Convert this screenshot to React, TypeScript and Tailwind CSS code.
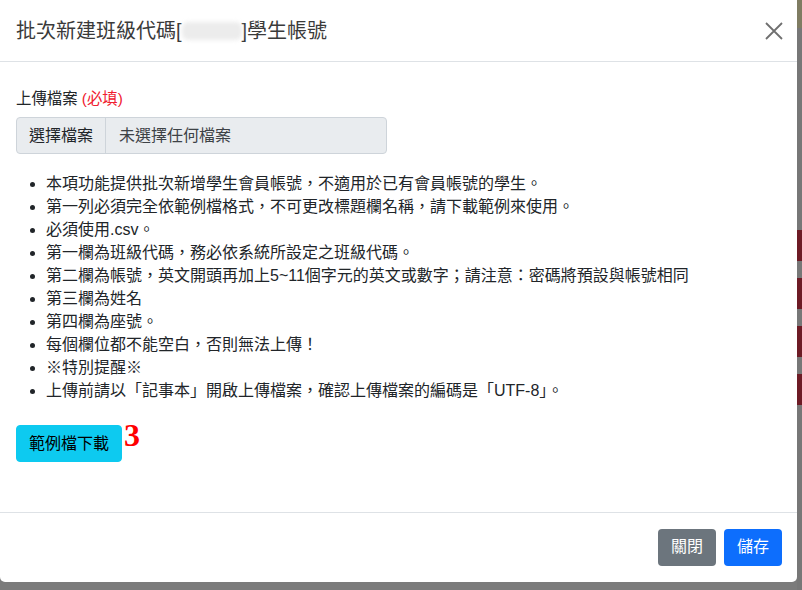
import React from "react";

const items = [
  "本項功能提供批次新增學生會員帳號，不適用於已有會員帳號的學生。",
  "第一列必須完全依範例檔格式，不可更改標題欄名稱，請下載範例來使用。",
  "必須使用.csv。",
  "第一欄為班級代碼，務必依系統所設定之班級代碼。",
  "第二欄為帳號，英文開頭再加上5~11個字元的英文或數字；請注意：密碼將預設與帳號相同",
  "第三欄為姓名",
  "第四欄為座號。",
  "每個欄位都不能空白，否則無法上傳！",
  "※特別提醒※",
  "上傳前請以「記事本」開啟上傳檔案，確認上傳檔案的編碼是「UTF-8」。",
];

export default function App() {
  return (
    <div
      className="w-[802px] h-[590px] bg-[#7b7b7b] flex overflow-hidden text-[#212529]"
      style={{ fontFamily: '"Liberation Sans", "Noto Sans CJK TC", sans-serif' }}
    >
      <div className="flex flex-col">
        <div className="w-[797px] h-[582px] bg-white rounded-b-[5px] flex flex-col">
          {/* header */}
          <div className="h-[62px] shrink-0 border-b border-[#dee2e6] flex items-center justify-between pl-[16px] pr-[14px]">
            <div className="text-[20px] leading-[28px] text-[#3a3a3a] flex items-center">
              <span>批次新建班級代碼[</span>
              <span className="inline-block w-[60px] h-[18px] rounded-[6px] bg-[#ececec] blur-[2px]" />
              <span>]學生帳號</span>
            </div>
            <svg width="20" height="20" viewBox="0 0 20 20" className="mr-[-1px]">
              <path d="M2 2 L18 18 M18 2 L2 18" stroke="#6f6f6f" strokeWidth="1.8" />
            </svg>
          </div>
          {/* body */}
          <div className="flex-1 px-[16px] pt-[25px] text-[16px] leading-[23px]">
            <div className="mb-[7px] text-[15.4px]">
              上傳檔案 <span className="text-[#f0202f]">(必填)</span>
            </div>
            <div className="w-[371px] h-[37px] bg-[#e9ecef] border border-[#ced4da] rounded-[4px] flex items-center">
              <div className="h-full flex items-center px-[12px] border-r border-[#ced4da]">選擇檔案</div>
              <div className="pl-[13px] text-[#3d4246]">未選擇任何檔案</div>
            </div>
            <ul className="list-disc pl-[30px] mt-[18px]">
              {items.map((t) => (
                <li key={t}>{t}</li>
              ))}
            </ul>
            <div className="flex items-start mt-[23px]">
              <button className="h-[37px] px-[12px] bg-[#0dcaf0] border border-[#0dcaf0] rounded-[4px] text-black">
                範例檔下載
              </button>
              <span
                className="text-[32px] leading-[30px] font-bold text-[#ff0000] ml-[2px] mt-[-5px]"
                style={{ fontFamily: '"Liberation Serif", serif' }}
              >
                3
              </span>
            </div>
          </div>
          {/* footer */}
          <div className="h-[70px] shrink-0 border-t border-[#dee2e6] flex items-center justify-end gap-[8px] pr-[15px] pb-[1px] text-[16px]">
            <button className="h-[37px] w-[58px] bg-[#6c757d] text-white rounded-[4px]">關閉</button>
            <button className="h-[37px] w-[58px] bg-[#0d6efd] text-white rounded-[4px]">儲存</button>
          </div>
        </div>
      </div>
      <div className="w-[5px] flex flex-col">
        <div className="h-[28px] bg-[#7f7c62]" />
        <div className="h-[202px] bg-[#777777]" />
        <div className="h-[31px] bg-[#6d1b25]" />
        <div className="h-[17px] bg-[#777777]" />
        <div className="h-[31px] bg-[#6d1b25]" />
        <div className="h-[17px] bg-[#777777]" />
        <div className="h-[31px] bg-[#6d1b25]" />
        <div className="h-[17px] bg-[#777777]" />
        <div className="h-[31px] bg-[#6d1b25]" />
        <div className="flex-1 bg-[#777777]" />
      </div>
    </div>
  );
}
